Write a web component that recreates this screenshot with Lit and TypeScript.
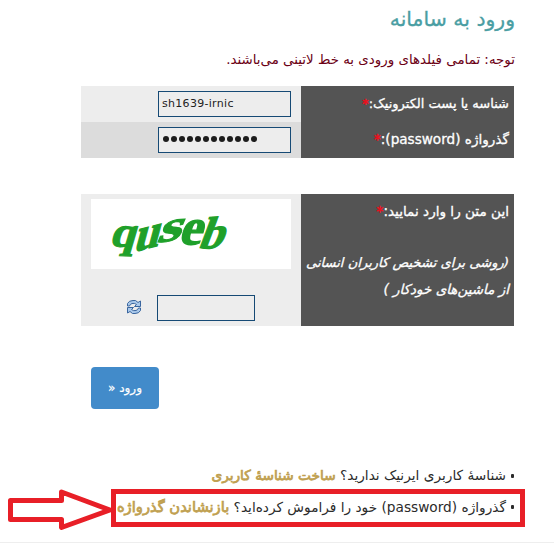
import { LitElement, html, css, svg } from "lit";
import { customElement } from "lit/decorators.js";

@customElement("app-root")
export class AppRoot extends LitElement {
  static styles = css`
    :host {
      display: block;
      position: relative;
      box-sizing: border-box;
      width: 554px;
      height: 545px;
      overflow: hidden;
      background: #fff;
      color: #2b2b2b;
      direction: rtl;
      font-family: "DejaVu Sans", sans-serif;
      font-size: 13.4px;
      white-space: nowrap;
    }
    .page { padding: 0 40px 0 81px; }
    h1 {
      margin: 0 -1px 0 0;
      height: 40px;
      font-size: 20.4px;
      font-weight: 400;
      line-height: 39px;
      color: #4a9ea3;
      -webkit-text-stroke: 0.3px currentColor;
    }
    .note { margin: 0 -1px 0 0; height: 46px; line-height: 40px; color: #6b0014; }
    .row { display: flex; height: 36px; background: #ededed; }
    .row.alt { background: #dcdcdc; }
    .label {
      box-sizing: border-box;
      width: 213px;
      padding-right: 5px;
      background: #545454;
      color: #fff;
      font-size: 13.6px;
      line-height: 35px;
      -webkit-text-stroke: 0.3px currentColor;
    }
    .row:not(.alt) .label { font-size: 13px; }
    .star { color: #f00d1c; -webkit-text-stroke: 0.5px currentColor; }
    .cell { flex: 1; padding: 5px 10px; display: flex; }
    .field {
      box-sizing: border-box;
      width: 133px;
      height: 26px;
      border: 1px solid #164a75;
      background: #ededed;
      direction: ltr;
      padding-left: 3px;
      font-size: 11px;
      letter-spacing: 0.3px;
      line-height: 23px;
      color: #222;
    }
    .dots { display: flex; align-items: center; gap: 2px; padding-left: 4px; padding-bottom: 3px; }
    .dots i { width: 6px; height: 6px; border-radius: 50%; background: #1c1c1c; }
    .check { display: flex; height: 132px; margin-top: 36px; background: #ededed; }
    .check .label em { display: block; font-size: 13.1px; line-height: 26px; padding-top: 21px; }
    .check .label em span { font-size: 13.5px; }
    .side { flex: 1; padding: 5px 10px; }
    .captcha { display: block; width: 200px; height: 70px; background: #fff; }
    .entry { display: flex; align-items: center; gap: 15px; margin: 26px 36px 0 0; }
    .entry .field { width: 98px; }
    .entry svg { width: 16px; height: 16px; margin-top: -2px; }
    .button {
      display: flex;
      align-items: center;
      justify-content: center;
      width: 68px;
      height: 42px;
      margin: 41px 355px 0 0;
      border-radius: 4px;
      background: #428bca;
      color: #fff;
      font-size: 12px;
      -webkit-text-stroke: 0.2px currentColor;
    }
    .links { margin: 51px 0 0 0; font-size: 13.7px; line-height: 31px; }
    .links b { font-weight: 400; color: #c0a050; -webkit-text-stroke: 0.75px currentColor; }
    .line:last-child b { font-size: 14.7px; }
    .line { display: flex; align-items: center; gap: 5px; height: 31px; }
    .line::before { content: ""; width: 3px; height: 4px; border-radius: 1px; background: #2b2b2b; }
    .rule { height: 1px; margin-top: 20px; background: #eee; }
    .mark { position: absolute; left: 0; top: 480px; width: 554px; height: 60px; }
  `;

  private letters: [string, string][] = [
    ["q", "matrix(1.2 0.05 -0.33 1.12 18 47)"],
    ["u", "matrix(1.2 -0.3 -0.35 1.3 42 53)"],
    ["s", "matrix(1.6 -0.25 -0.5 1.2 65 44)"],
    ["e", "matrix(1.35 0.03 -0.4 1.35 87 45)"],
    ["b", "matrix(1.2 -0.08 -0.45 1.2 106 50)"],
  ];

  render() {
    return html`
      <main class="page">
        <h1>ورود به سامانه</h1>
        <p class="note">توجه: تمامی فیلدهای ورودی به خط لاتینی می‌باشند.</p>
        <div class="row">
          <div class="label">شناسه یا پست الکترونیک:<span class="star">*</span></div>
          <div class="cell"><div class="field">sh1639-irnic</div></div>
        </div>
        <div class="row alt">
          <div class="label">گذرواژه (password):<span class="star">*</span></div>
          <div class="cell"><div class="field dots">${Array.from({ length: 12 }, () => html`<i></i>`)}</div></div>
        </div>
        <div class="check">
          <div class="label">
            این متن را وارد نمایید:<span class="star">*</span>
            <em>(روشی برای تشخیص کاربران انسانی<br /><span>از ماشین‌های خودکار )</span></em>
          </div>
          <div class="side">
            <svg class="captcha" viewBox="0 0 200 70" direction="ltr">
              <g fill="#1fa02a" stroke="#1fa02a" stroke-width="1" font-family="Liberation Serif, serif" font-weight="700" font-size="38">
                ${this.letters.map(([c, t]) => svg`<text transform=${t}>${c}</text>`)}
              </g>
            </svg>
            <div class="entry">
              <div class="field"></div>
              <svg viewBox="0 0 16 16" fill="#a9c8ea" stroke="#3a669f" stroke-linejoin="round">
                <path d="M1.500 7V4.500Q3 1.500 7 1.500H9.500L12 3.500 14.500 2V7.500H8.500L10.500 5.500Q8.500 3.800 6 4.500 4 5.200 3.500 7z" />
                <path d="M14.500 9v2.500Q13 14.500 9 14.500H6.500L4 12.500 1.500 14V8.500H7.500L5.500 10.500Q7.500 12.200 10 11.500 12 10.800 12.500 9z" />
              </svg>
            </div>
          </div>
        </div>
        <div class="button">ورود «</div>
        <div class="links">
          <div class="line"><span>شناسهٔ کاربری ایرنیک ندارید؟ <b>ساخت شناسهٔ کاربری</b></span></div>
          <div class="line"><span>گذرواژه (password) خود را فراموش کرده‌اید؟ <b>بازنشاندن گذرواژه</b></span></div>
        </div>
      </main>
      <div class="rule"></div>
      <svg class="mark" viewBox="0 480 554 60" fill="none" stroke="#e81f27" stroke-width="5">
        <rect x="113.500" y="491.500" width="409" height="33" />
        <path d="M10.500 500.500H61.500V492L110 510 61.500 527.500V519.500H10.500z" stroke-linejoin="round" />
      </svg>
    `;
  }
}
